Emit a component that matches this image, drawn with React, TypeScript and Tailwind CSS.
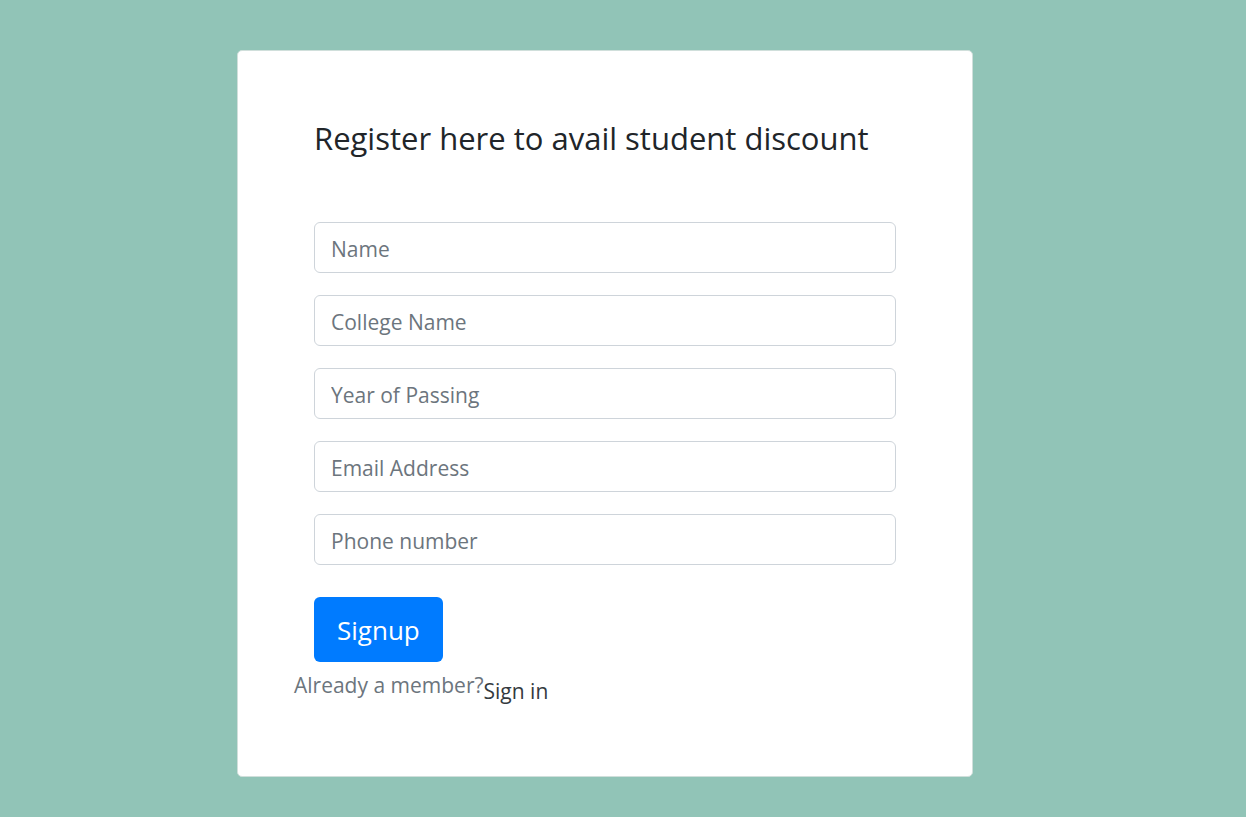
const fields = [
  { id: "name", label: "Name", type: "text" },
  { id: "college", label: "College Name", type: "text" },
  { id: "year", label: "Year of Passing", type: "text" },
  { id: "email", label: "Email Address", type: "email" },
  { id: "phone", label: "Phone number", type: "tel" },
];

export default function App() {
  return (
    <div className="min-h-screen bg-[#91c4b7] pt-[50px] pb-10 pl-[237px] pr-[273px] font-['Open_Sans','Noto_Sans',sans-serif] text-[#212529]">
      <main className="rounded-[5px] border border-[#d0dfdb] bg-white px-[76px] pt-[66px] pb-[69px]">
        <form onSubmit={(e) => e.preventDefault()}>
          <h1 className="text-[31px] leading-[42px]">
            Register here to avail student discount
          </h1>
          <div className="mt-[63px] flex flex-col gap-[22px]">
            {fields.map((f) => (
              <input
                key={f.id}
                id={f.id}
                type={f.type}
                aria-label={f.label}
                placeholder={f.label}
                className="h-[51px] w-full rounded-md border border-[#ced4da] bg-white px-4 pt-[2px] text-[21px] placeholder:text-[#6c757d]"
              />
            ))}
          </div>
          <button
            type="submit"
            className="mt-8 block h-[65px] rounded-md bg-[#007bff] px-[23px] pt-[2px] text-[26px] text-white"
          >
            Signup
          </button>
        </form>
        <div className="-ml-5 mt-[7px] flex items-start text-[21px] leading-8">
          <p className="text-[#6c757d]">Already a member?</p>
          <a href="#signin" className="mt-[6px] text-[#343a40]">Sign in</a>
        </div>
      </main>
    </div>
  );
}
